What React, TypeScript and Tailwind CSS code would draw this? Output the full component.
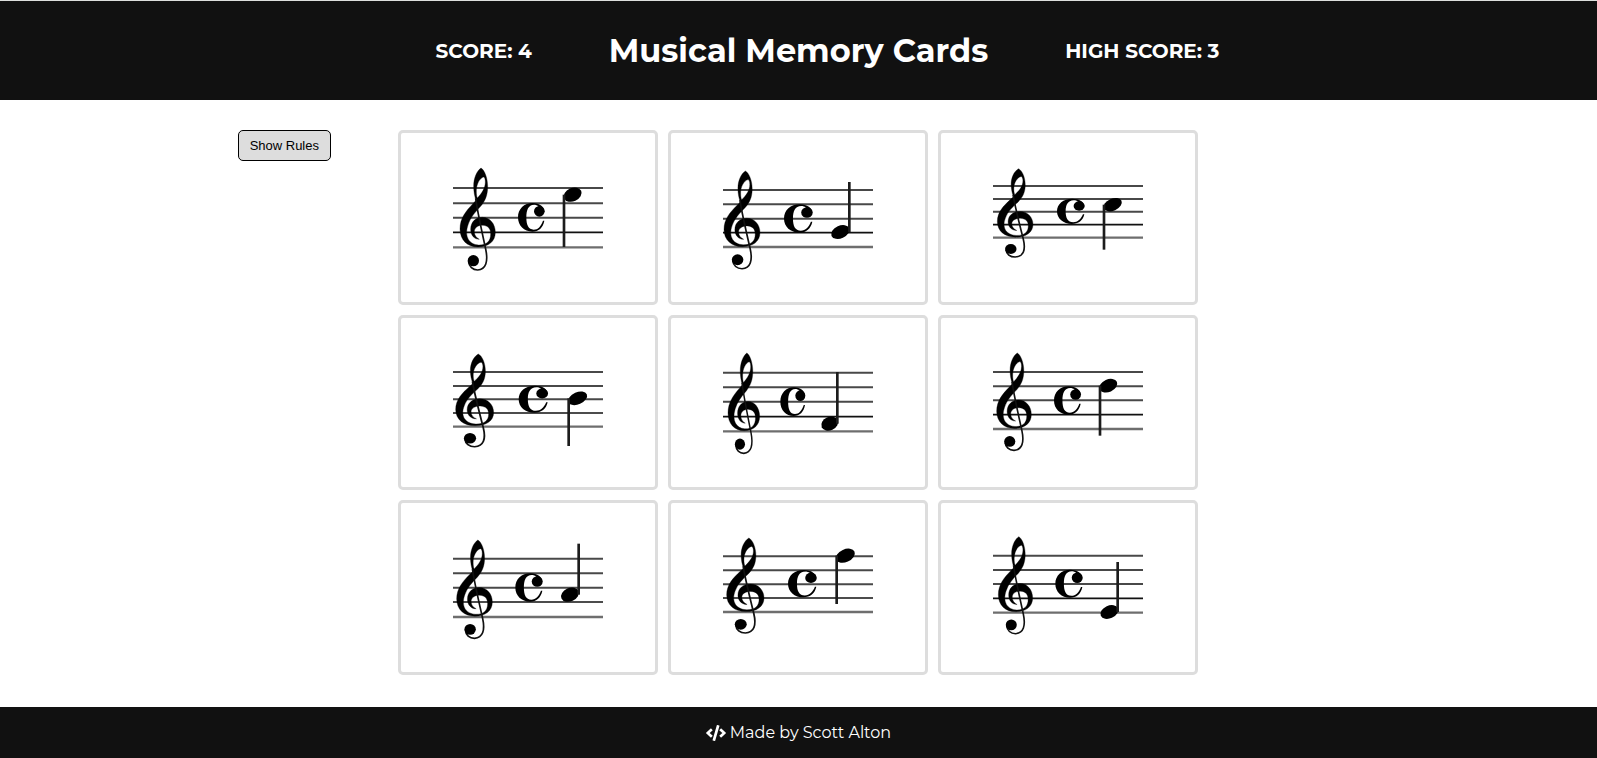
import { FaCode } from "react-icons/fa";

type Box = [x0: number, y0: number, x1: number, y1: number];

interface Card {
  name: string;
  lines: number[];
  clef: Box;
  time: Box;
  head: [x: number, y: number, rx: number, ry: number];
  stem: [x: number, end: number];
}

const cards: Card[] = [
  { name: "E5", lines: [189, 235, 278, 322, 367], clef: [210, 129, 316, 437], time: [384, 234, 463, 320], head: [548, 209, 28, 20], stem: [522, 366] },
  { name: "G4", lines: [195, 238, 281, 323, 366], clef: [192, 138, 300, 433], time: [372, 238, 457, 323], head: [541, 321, 29, 19], stem: [568, 171] },
  { name: "C5", lines: [183, 222, 260, 299, 338], clef: [202, 131, 309, 398], time: [381, 221, 463, 297], head: [548, 239, 29, 18], stem: [522, 374] },
  { name: "B4", lines: [186, 228, 268, 309, 350], clef: [197, 132, 311, 412], time: [386, 227, 473, 308], head: [563, 265, 30, 18], stem: [536, 408] },
  { name: "F4", lines: [188, 232, 275, 320, 364], clef: [204, 129, 299, 432], time: [361, 232, 435, 318], head: [509, 341, 26, 20], stem: [532, 186] },
  { name: "D5", lines: [186, 229, 271, 314, 357], clef: [200, 129, 304, 423], time: [372, 229, 452, 314], head: [535, 227, 28, 19], stem: [510, 377] },
  { name: "A4", lines: [191, 235, 278, 321, 366], clef: [200, 135, 307, 432], time: [376, 235, 457, 320], head: [540, 299, 28, 20], stem: [566, 146] },
  { name: "F5", lines: [184, 226, 268, 309, 351], clef: [200, 129, 312, 416], time: [384, 225, 469, 307], head: [556, 182, 30, 19], stem: [530, 327] },
  { name: "E4", lines: [182, 225, 267, 310, 353], clef: [205, 125, 308, 418], time: [376, 224, 457, 308], head: [538, 351, 28, 19], stem: [563, 201] },
];

const CLEF_BOX: Box = [210, 129, 316, 437];
const TIME_BOX: Box = [384, 234, 463, 320];

function fit(from: Box, to: Box) {
  const sx = (to[2] - to[0]) / (from[2] - from[0]);
  const sy = (to[3] - to[1]) / (from[3] - from[1]);
  return `translate(${to[0] - from[0] * sx} ${to[1] - from[1] * sy}) scale(${sx} ${sy})`;
}

function Staff({ card }: { card: Card }) {
  const [hx, hy, rx, ry] = card.head;
  const [stemX, stemEnd] = card.stem;
  return (
    <svg viewBox="189 24 450 507" className="h-[169px] w-[150px]" aria-hidden="true">
      {card.lines.map((y, i) => (
        <path
          key={y}
          d={`M189 ${y}H639`}
          stroke={i === 3 ? "#111" : i === 4 ? "#6e6e6e" : "#484848"}
          strokeWidth={i === 3 ? 5 : i === 4 ? 7 : 6}
        />
      ))}
      <g transform={fit(CLEF_BOX, card.clef)}>
        <path
          fillRule="evenodd"
          stroke="#000"
          strokeWidth="1"
          d="M273 129C284 135 293 160 293 185C293 212 285 228 272 244C255 262 241 278 234 300C222 335 238 359 266 360C290 361 302 348 302 327C302 311 294 302 279 301C265 300 253 308 253 320C253 331 259 338 268 343C252 343 242 330 242 313C242 290 258 277 277 277C300 277 316 297 316 322C316 350 295 366 264 366C232 366 210 345 210 312C210 280 228 258 248 237L258 226C254 215 251 200 251 183C251 160 260 138 273 129ZM281 156C269 159 259 178 259 198C259 208 260 214 262 219C275 205 286 190 286 171C286 163 284 157 281 156Z"
        />
        <path
          d="M257 220C260 245 280 340 287 372C295 410 288 433 263 435C248 435 237 425 236 410"
          fill="none"
          stroke="#111"
          strokeWidth="5"
        />
        <circle cx="250" cy="407" r="17" />
      </g>
      <g transform={fit(TIME_BOX, card.time)}>
        <path d="M463 287C459 308 446 320 427 320C402 320 384 302 384 277C384 252 402 234 428 234C449 234 463 245 463 261L446 252C450 246 442 239 432 239C415 240 409 254 409 277C409 300 415 314 431 314C444 314 453 304 459 287Z" />
        <circle cx="448" cy="259" r="16" />
      </g>
      <ellipse cx={hx} cy={hy} rx={rx} ry={ry} transform={`rotate(-24 ${hx} ${hy})`} />
      <path d={`M${stemX} ${hy}V${stemEnd}`} stroke="#1c1c1c" strokeWidth="8" />
    </svg>
  );
}

export default function App() {
  return (
    <div className="flex min-h-screen flex-col bg-white font-[Montserrat,Inter,sans-serif]">
      <header className="grid h-[100px] grid-cols-[1fr_auto_1fr] items-center gap-[77px] border-t border-[#dddfdd] bg-[#111] font-bold text-white">
        <p className="text-right text-[20px]">SCORE: 4</p>
        <h1 className="text-[32px]">Musical Memory Cards</h1>
        <p className="text-[20px]">HIGH SCORE: 3</p>
      </header>

      <main className="grid flex-1 grid-cols-[1fr_minmax(0,800px)_1fr] items-start pt-[30px] pr-px pb-8">
        <div className="flex justify-end pr-[67px]">
          <button
            type="button"
            className="h-[31px] rounded-[5px] border border-black bg-[#ddd] px-[11px] font-['Liberation_Sans',Arial,sans-serif] text-[13px] text-black"
          >
            Show Rules
          </button>
        </div>
        <div className="grid grid-cols-3 gap-[10px]">
          {cards.map((card) => (
            <button
              key={card.name}
              type="button"
              aria-label={card.name}
              className="flex justify-center rounded-[5px] border-3 border-[#ddd] bg-white"
            >
              <Staff card={card} />
            </button>
          ))}
        </div>
      </main>

      <footer className="flex h-[51px] items-center justify-center gap-1 bg-[#111] text-base text-white">
        <FaCode className="size-5" aria-hidden="true" />
        <p>Made by Scott Alton</p>
      </footer>
    </div>
  );
}
